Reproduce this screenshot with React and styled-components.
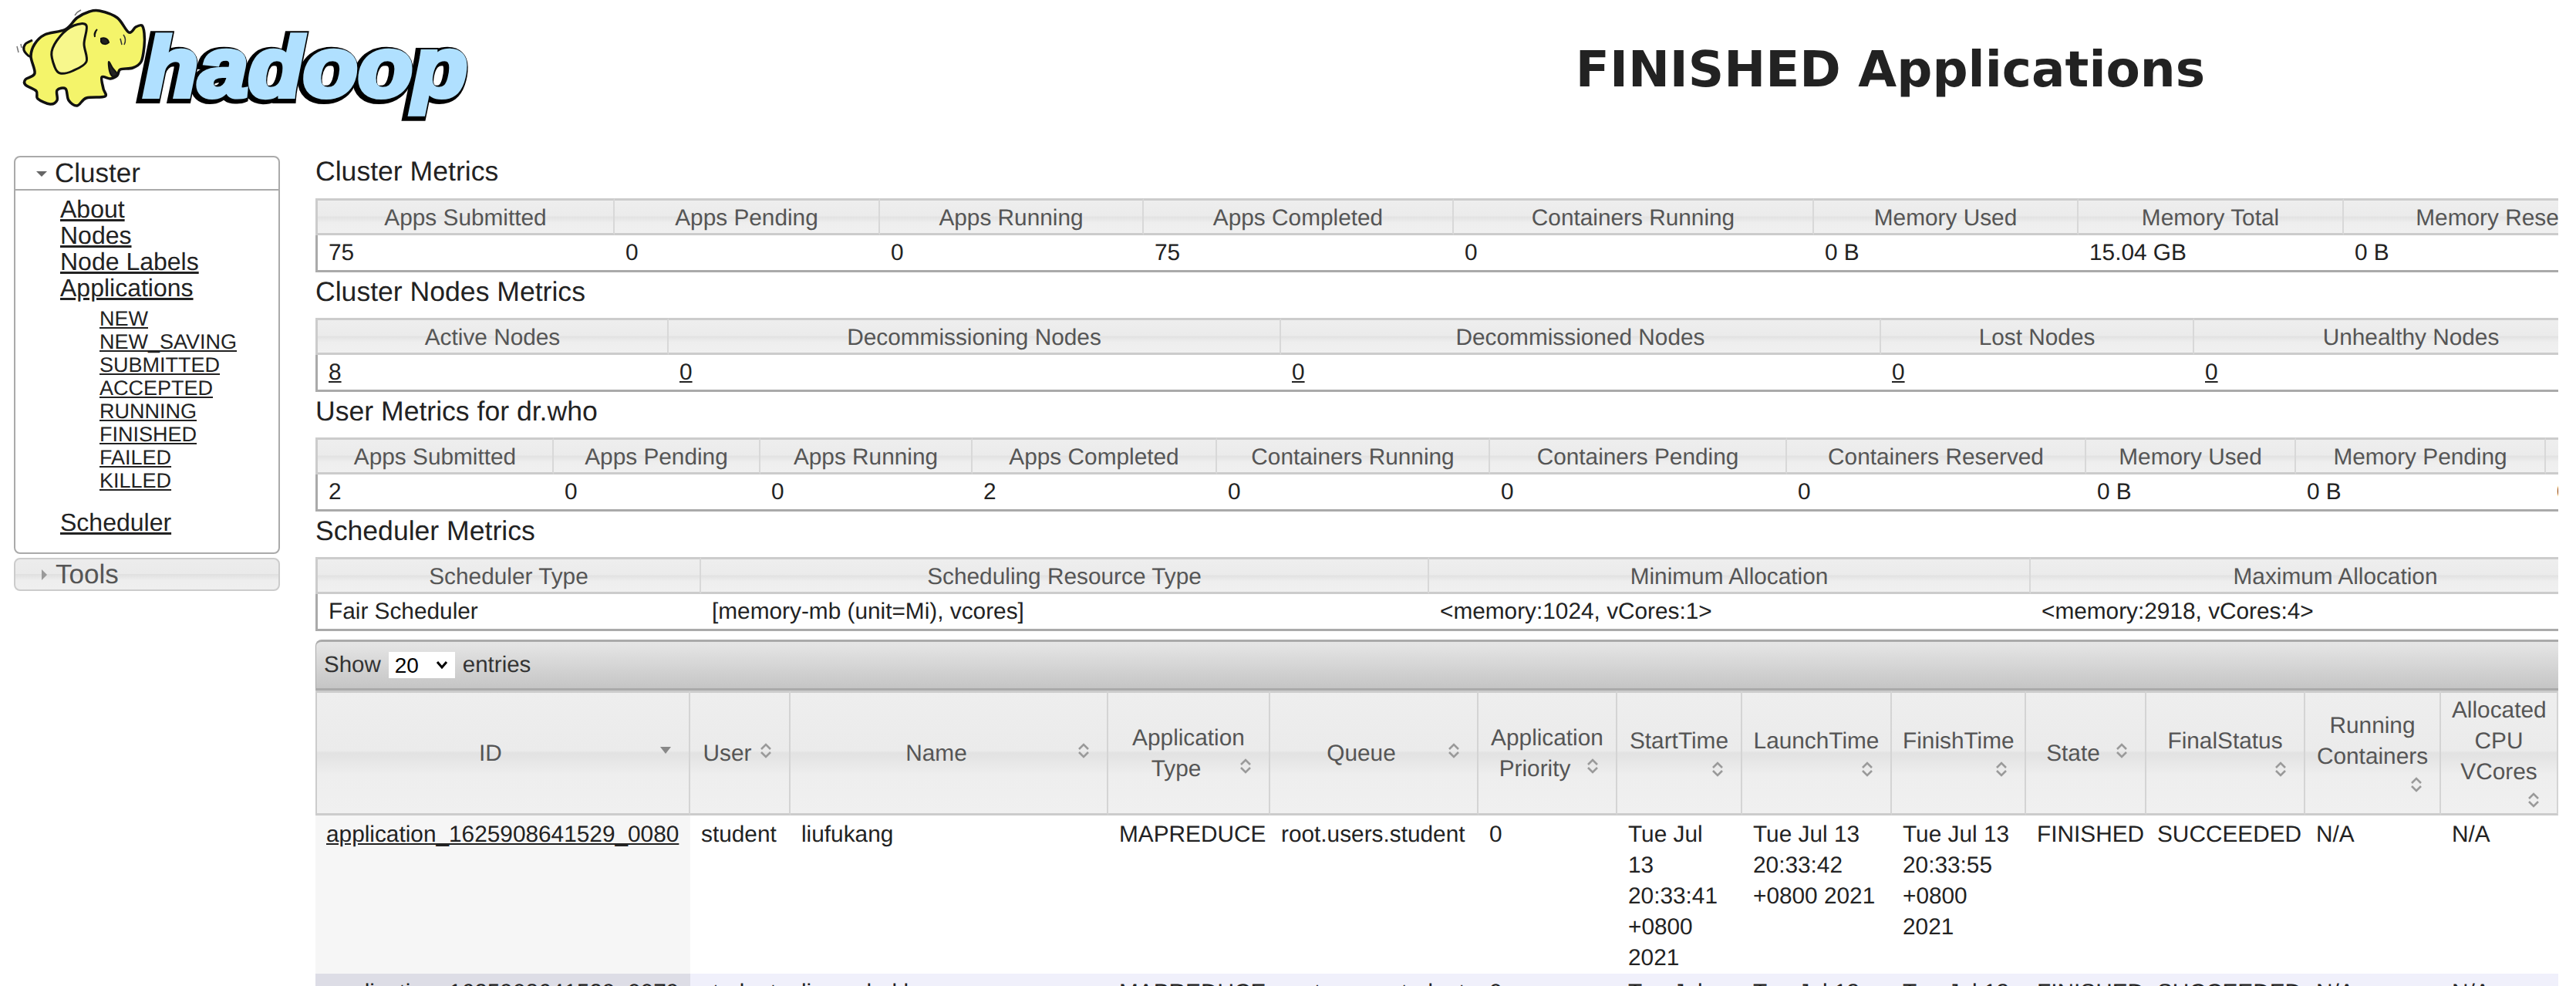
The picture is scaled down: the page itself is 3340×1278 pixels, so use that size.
import React from 'react';
import styled, { createGlobalStyle } from 'styled-components';

const Global = createGlobalStyle`
  html, body { margin: 0; padding: 0; background: #fff; height: 1278px; overflow: hidden; }
  body { font-family: "Liberation Sans", Arial, sans-serif; font-size: 29.8px; color: #222; text-rendering: geometricPrecision; }
  #root { height: 1278px; overflow: hidden; }
`;

const Page = styled.div`
  width: 3340px;
`;
const Header = styled.header`
  display: grid;
  grid-template-columns: 1562px 1fr;
  height: 202px;
`;
const LogoBox = styled.div`
  height: 170px;
`;
const Title = styled.h1`
  margin: 0;
  padding-top: 50px;
  text-align: center;
  font-family: "DejaVu Sans", sans-serif;
  font-weight: bold;
  font-size: 64.5px;
  line-height: 82px;
  color: #222;
`;
const Body = styled.div`
  display: grid;
  grid-template-columns: 345px 2908px;
  column-gap: 46px;
  padding-left: 18px;
`;
const Nav = styled.nav`
  display: flex;
  flex-direction: column;
  gap: 5px;
`;
const Panel = styled.section`
  border: 2px solid #aaa;
  border-radius: 8px;
  box-sizing: border-box;
`;
const PanelHead = styled.div`
  display: flex;
  align-items: center;
  box-sizing: border-box;
  height: 43px;
  padding-left: 26px;
  gap: 9px;
  font-size: 35px;
  color: #222;
  border-bottom: 2px solid #aaa;
`;
const ClosedPanel = styled(Panel)`
  height: 43px;
  display: flex;
  align-items: center;
  padding-left: 29px;
  gap: 7px;
  font-size: 35px;
  color: #555;
  border-color: #ccc;
  background: linear-gradient(#ececec 0, #eaeaea 49%, #e0e0e0 50%, #eeeeee 70%, #efefef 100%);
`;
const Menu = styled.ul`
  list-style: none;
  margin: 0;
  padding: 7px 0 22px 58px;
  font-size: 32px;
  line-height: 34px;
`;
const MenuItem = styled.li`
  margin-top: ${(p) => (p.$spaced ? '22px' : '0')};
`;
const SubMenu = styled.ul`
  list-style: none;
  margin: 0;
  padding: 8px 0 0 51px;
  font-size: 27px;
  line-height: 30px;
`;
const Link = styled.a`
  color: #222;
  text-decoration: underline;
`;
const Content = styled.main`
  overflow: hidden;
  min-width: 0;
`;
const Heading = styled.h3`
  margin: ${(p) => (p.$first ? '0 0 15px' : '5px 0 14px')};
  font-weight: normal;
  font-size: 35.6px;
  line-height: 40px;
  color: #222;
  white-space: nowrap;
`;
const MetricTable = styled.table`
  border-collapse: separate;
  border-spacing: 0;
  table-layout: fixed;
`;
const band = 'linear-gradient(#eeeeee 0, #ebebeb 48%, #e2e2e2 50%, #eeeeee 68%, #f0f0f0 100%)';
const MetricHead = styled.th`
  box-sizing: border-box;
  height: 48px;
  padding: 3px 10px 0;
  font-weight: normal;
  font-size: 29.8px;
  color: #555;
  white-space: nowrap;
  overflow: hidden;
  text-align: center;
  background: ${band};
  border-top: 3px solid #ccc;
  border-bottom: 3px solid #ccc;
  border-right: 2px solid #d8d8d8;
  &:first-child { border-left: 3px solid #ccc; }
`;
const MetricCell = styled.td`
  box-sizing: border-box;
  height: 48px;
  padding: 0 0 0 14px;
  font-size: 29.8px;
  color: #222;
  white-space: nowrap;
  border-bottom: 3px solid #aaa;
  &:first-child { border-left: 3px solid #aaa; }
`;
const Toolbar = styled.div`
  display: flex;
  align-items: center;
  gap: 10px;
  box-sizing: border-box;
  height: 66px;
  margin-top: 11px;
  padding-left: 10px;
  font-size: 29.5px;
  color: #333;
  background: linear-gradient(#e6e6e6 0, #c5c5c5 100%);
  border-top: 3px solid #aaa;
  border-bottom: 3px solid #aaa;
  border-top-left-radius: 8px;
  border-left: 1px solid #aaa;
`;
const SelectWrap = styled.div`
  position: relative;
  width: 86px;
  height: 34px;
`;
const Select = styled.select`
  appearance: none;
  width: 100%;
  height: 100%;
  border: 0;
  background: #fff;
  padding: 0 0 0 8px;
  font-family: inherit;
  font-size: 28px;
  color: #000;
`;
const SelectArrow = styled.svg`
  position: absolute;
  right: 9px;
  top: 11px;
  pointer-events: none;
`;
const DataTable = styled.table`
  border-collapse: separate;
  border-spacing: 0;
  table-layout: fixed;
`;
const DataHead = styled.th`
  box-sizing: border-box;
  height: 162px;
  padding: 2px 14px 0;
  font-weight: normal;
  font-size: 29.8px;
  line-height: 40px;
  color: #555;
  text-align: center;
  vertical-align: middle;
  background: ${band};
  border-top: 3px solid #ccc;
  border-bottom: 3px solid #ccc;
  border-right: 2px solid #d4d4d4;
  &:first-child { border-left: 2px solid #ccc; }
`;
const SortBox = styled.span`
  float: right;
  width: 32px;
  height: 32px;
  display: flex;
  align-items: center;
  justify-content: center;
`;
const DataCell = styled.td`
  box-sizing: border-box;
  padding: 5px 14px 0;
  font-size: 29.8px;
  line-height: 40px;
  color: #222;
  vertical-align: top;
  height: 205px;
  background: ${(p) => (p.$shade ? (p.$alt ? '#dddde6' : '#f6f6f6') : p.$alt ? '#f0f0fb' : '#fff')};
`;

const Tri = ({ open }) => (
  <svg width="16" height="16" viewBox="0 0 16 16" style={{ flex: 'none' }}>
    {open ? <path d="M1 5h14L8 12z" fill="#666" /> : <path d="M5 1v14l7-7z" fill="#999" />}
  </svg>
);

const SortIcon = ({ active }) => (
  <SortBox>
    {active ? (
      <svg width="16" height="10" viewBox="0 0 16 10"><path d="M1 0h14L8 9z" fill="#888" /></svg>
    ) : (
      <svg width="16" height="22" viewBox="0 0 16 22" fill="none" stroke="#9a9a9a" strokeWidth="2.6">
        <path d="M2 9l6-6 6 6M2 13l6 6 6-6" />
      </svg>
    )}
  </SortBox>
);

const smooth = (pts, closed = true) => {
  const n = pts.length;
  const at = (i) => (closed ? pts[(i + n) % n] : pts[Math.max(0, Math.min(n - 1, i))]);
  let d = `M${pts[0][0]} ${pts[0][1]}`;
  const last = closed ? n : n - 1;
  for (let i = 0; i < last; i++) {
    const [p0, p1, p2, p3] = [at(i - 1), at(i), at(i + 1), at(i + 2)];
    d += `C${(p1[0] + (p2[0] - p0[0]) / 6).toFixed(1)} ${(p1[1] + (p2[1] - p0[1]) / 6).toFixed(1)} ${(p2[0] - (p3[0] - p1[0]) / 6).toFixed(1)} ${(p2[1] - (p3[1] - p1[1]) / 6).toFixed(1)} ${p2[0]} ${p2[1]}`;
  }
  return d + (closed ? 'Z' : '');
};

const bodyPts = [[129,14],[152,23],[167,42],[176,35],[184,33],[187,43],[187,60],[183,80],[172,88],[156,90],[152,98],[143,102],[132,100],[134,115],[136,125],[112,127],[100,137],[89,130],[85,115],[74,117],[74,130],[65,135],[49,128],[47,118],[33,110],[33,103],[45,95],[40,73],[45,57],[58,45],[85,38],[100,23],[116,15]];
const earPts = [[96,33],[112,33],[109,57],[112,80],[94,92],[78,95],[71,87],[67,67],[78,47]];
const tailPts = [[42,52],[33,57],[31,65],[38,73],[45,72]];
const mouthPts = [[141,80],[146,88],[152,96],[146,99],[142,92]];

const wordProps = {
  fontFamily: 'Liberation Sans',
  fontWeight: 'bold',
  fontStyle: 'italic',
  fontSize: 110,
  textLength: 420,
  lengthAdjust: 'spacingAndGlyphs',
  strokeLinejoin: 'miter',
};

const Logo = () => (
  <svg width="640" height="170" viewBox="0 0 640 170">
    <text {...wordProps} x="183" y="127" fill="#000" stroke="#000" strokeWidth="14">hadoop</text>
    <text {...wordProps} x="186" y="125" fill="#b0e0ff" stroke="#b0e0ff" strokeWidth="6">hadoop</text>
    <path d={smooth(tailPts, false)} fill="#f4f46a" stroke="#111" strokeWidth="3" />
    <path d={smooth(bodyPts)} fill="#f4f46a" stroke="#111" strokeWidth="3.5" />
    <path d={smooth(earPts)} fill="#f7f78c" stroke="#111" strokeWidth="3" />
    <path d="M126 38c-3 3-4 7-3 10M131 50c4-2 9 0 10 5-3 3-8 3-10-1z" fill="#222" stroke="#111" strokeWidth="2" />
    <path d="M160 45c3 4 3 9 1 13M156 50l2 8" fill="none" stroke="#333" strokeWidth="1.5" />
    <path d={smooth(mouthPts)} fill="#222" stroke="#111" strokeWidth="2" />
    <path d="M100 16l5-3M97 20l3-4M24 68l-2-8M28 62l-1-5" stroke="#777" strokeWidth="1.5" fill="none" />
  </svg>
);

const Metric = ({ widths, heads, cells }) => (
  <MetricTable style={{ width: widths.reduce((a, b) => a + b, 0) }}>
    <colgroup>{widths.map((w, i) => <col key={i} style={{ width: w }} />)}</colgroup>
    <thead><tr>{heads.map((h) => <MetricHead key={h}>{h}</MetricHead>)}</tr></thead>
    <tbody>
      <tr>
        {cells.map((c, i) => (
          <MetricCell key={i}>{typeof c === 'object' ? <Link href="#">{c.href}</Link> : c}</MetricCell>
        ))}
      </tr>
    </tbody>
  </MetricTable>
);

const l = (v) => ({ href: v });

const clusterMetrics = {
  widths: [388, 344, 342, 402, 467, 343, 344, 432],
  heads: ['Apps Submitted', 'Apps Pending', 'Apps Running', 'Apps Completed', 'Containers Running', 'Memory Used', 'Memory Total', 'Memory Reserved'],
  cells: ['75', '0', '0', '75', '0', '0 B', '15.04 GB', '0 B'],
};
const nodeMetrics = {
  widths: [458, 794, 778, 406, 564],
  heads: ['Active Nodes', 'Decommissioning Nodes', 'Decommissioned Nodes', 'Lost Nodes', 'Unhealthy Nodes'],
  cells: [l('8'), l('0'), l('0'), l('0'), l('0')],
};
const userMetrics = {
  widths: [309, 268, 275, 317, 354, 385, 388, 272, 324, 300],
  heads: ['Apps Submitted', 'Apps Pending', 'Apps Running', 'Apps Completed', 'Containers Running', 'Containers Pending', 'Containers Reserved', 'Memory Used', 'Memory Pending', 'Memory Reserved'],
  cells: ['2', '0', '0', '2', '0', '0', '0', '0 B', '0 B', '0 B'],
};
const schedMetrics = {
  widths: [500, 944, 780, 792],
  heads: ['Scheduler Type', 'Scheduling Resource Type', 'Minimum Allocation', 'Maximum Allocation'],
  cells: ['Fair Scheduler', '[memory-mb (unit=Mi), vcores]', '<memory:1024, vCores:1>', '<memory:2918, vCores:4>'],
};

const dataWidths = [486, 130, 412, 210, 270, 180, 162, 194, 174, 156, 206, 176, 152];
const dataHeads = ['ID', 'User', 'Name', 'Application Type', 'Queue', 'Application Priority', 'StartTime', 'LaunchTime', 'FinishTime', 'State', 'FinalStatus', 'Running Containers', 'Allocated CPU VCores'];

const rows = [
  { id: 'application_1625908641529_0080', name: 'liufukang', start: '20:33:41', launch: '20:33:42', finish: '20:33:55' },
  { id: 'application_1625908641529_0079', name: 'liuwenbokk', start: '20:33:11', launch: '20:33:12', finish: '20:33:25' },
];

const links = ['About', 'Nodes', 'Node Labels', 'Applications'];
const states = ['NEW', 'NEW_SAVING', 'SUBMITTED', 'ACCEPTED', 'RUNNING', 'FINISHED', 'FAILED', 'KILLED'];

export default function App() {
  return (
    <Page>
      <Global />
      <Header>
        <LogoBox><Logo /></LogoBox>
        <Title>FINISHED Applications</Title>
      </Header>
      <Body>
        <Nav>
          <Panel>
            <PanelHead><Tri open />Cluster</PanelHead>
            <Menu>
              {links.map((t) => <MenuItem key={t}><Link href="#">{t}</Link></MenuItem>)}
              <SubMenu>
                {states.map((s) => <li key={s}><Link href="#">{s}</Link></li>)}
              </SubMenu>
              <MenuItem $spaced><Link href="#">Scheduler</Link></MenuItem>
            </Menu>
          </Panel>
          <ClosedPanel><Tri />Tools</ClosedPanel>
        </Nav>
        <Content>
          <Heading $first>Cluster Metrics</Heading>
          <Metric {...clusterMetrics} />
          <Heading>Cluster Nodes Metrics</Heading>
          <Metric {...nodeMetrics} />
          <Heading>User Metrics for dr.who</Heading>
          <Metric {...userMetrics} />
          <Heading>Scheduler Metrics</Heading>
          <Metric {...schedMetrics} />
          <Toolbar>
            Show
            <SelectWrap>
              <Select defaultValue="20"><option>20</option><option>50</option></Select>
              <SelectArrow width="16" height="12" viewBox="0 0 16 12" fill="none" stroke="#000" strokeWidth="3">
                <path d="M2 2l6 7 6-7" />
              </SelectArrow>
            </SelectWrap>
            entries
          </Toolbar>
          <DataTable style={{ width: dataWidths.reduce((a, b) => a + b, 0) }}>
            <colgroup>{dataWidths.map((w, i) => <col key={i} style={{ width: w }} />)}</colgroup>
            <thead>
              <tr>
                {dataHeads.map((h, i) => (
                  <DataHead key={h}>{h}<SortIcon active={i === 0} /></DataHead>
                ))}
              </tr>
            </thead>
            <tbody>
              {rows.map((r, i) => (
                <tr key={r.id}>
                  <DataCell $shade $alt={i === 1}><Link href="#">{r.id}</Link></DataCell>
                  <DataCell $alt={i === 1}>student</DataCell>
                  <DataCell $alt={i === 1}>{r.name}</DataCell>
                  <DataCell $alt={i === 1}>MAPREDUCE</DataCell>
                  <DataCell $alt={i === 1}>root.users.student</DataCell>
                  <DataCell $alt={i === 1}>0</DataCell>
                  <DataCell $alt={i === 1}>Tue Jul 13 {r.start} +0800 2021</DataCell>
                  <DataCell $alt={i === 1}>Tue Jul 13 {r.launch} +0800 2021</DataCell>
                  <DataCell $alt={i === 1}>Tue Jul 13 {r.finish} +0800 2021</DataCell>
                  <DataCell $alt={i === 1}>FINISHED</DataCell>
                  <DataCell $alt={i === 1}>SUCCEEDED</DataCell>
                  <DataCell $alt={i === 1}>N/A</DataCell>
                  <DataCell $alt={i === 1}>N/A</DataCell>
                </tr>
              ))}
            </tbody>
          </DataTable>
        </Content>
      </Body>
    </Page>
  );
}
